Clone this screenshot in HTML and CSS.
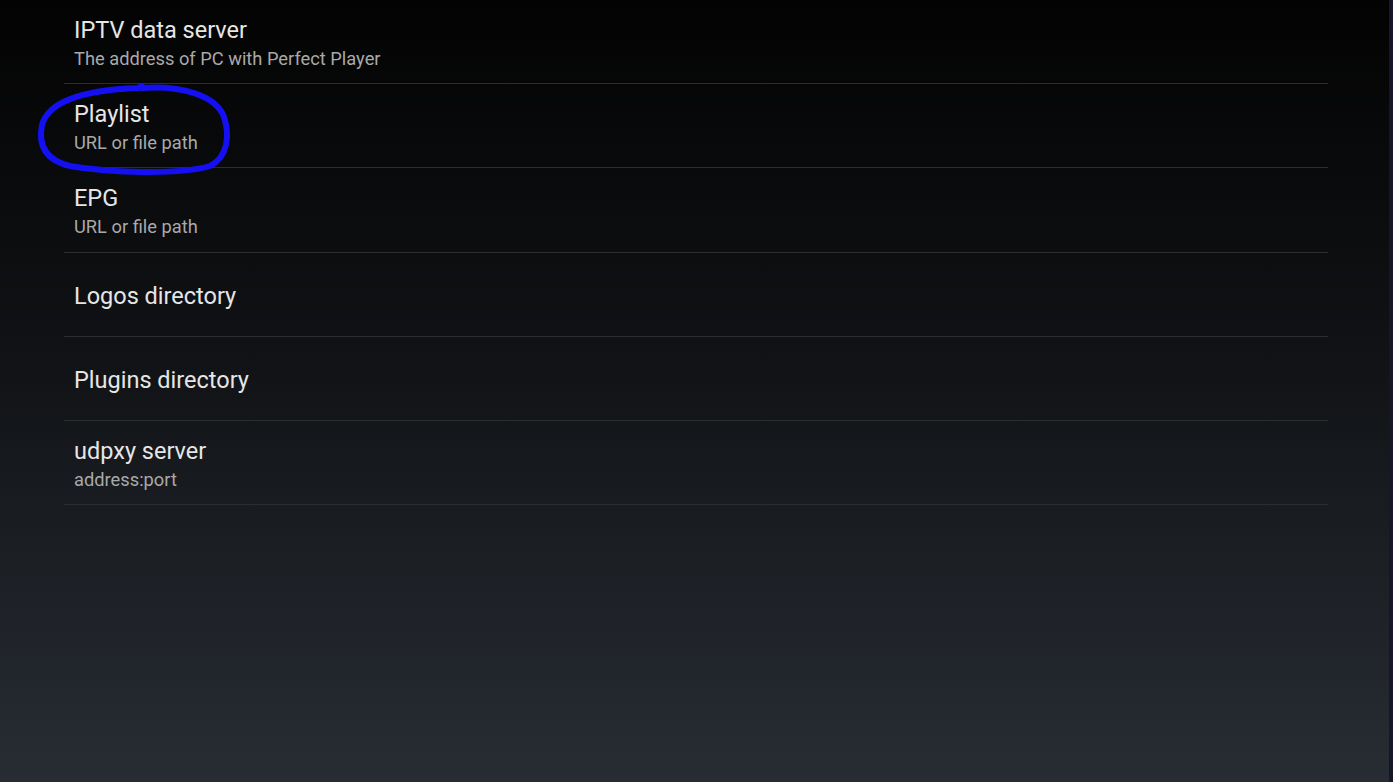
FILE: index.html
```html
<!DOCTYPE html>
<html lang="en">
    <head>
        <meta charset="UTF-8">
        <meta name="viewport" content="width=device-width, initial-scale=1.0">
        <title>Settings</title>
        <link rel="stylesheet" href="styles.css">
    </head>
    <body>
        <div class="screen">
            <ul class="prefs">
                <li class="pref">
                    <div class="pref-title">IPTV data server</div>
                    <div class="pref-summary">The address of PC with Perfect Player</div>
                </li>
                <li class="pref">
                    <div class="pref-title">Playlist</div>
                    <div class="pref-summary">URL or file path</div>
                </li>
                <li class="pref">
                    <div class="pref-title">EPG</div>
                    <div class="pref-summary">URL or file path</div>
                </li>
                <li class="pref">
                    <div class="pref-title">Logos directory</div>
                </li>
                <li class="pref">
                    <div class="pref-title">Plugins directory</div>
                </li>
                <li class="pref">
                    <div class="pref-title">udpxy server</div>
                    <div class="pref-summary">address:port</div>
                </li>
            </ul>
            <svg class="scribble" width="210" height="105" viewBox="0 0 210 105">
                <path d="M 112 13 C 150 10, 186 20, 194 42 C 200 60, 198 82, 180 91 C 150 100, 80 98, 40 91 C 15 85, 8 70, 12 50 C 18 28, 50 15, 108 13 L 112 11" />
            </svg>
        </div>
    </body>
</html>
```

FILE: styles.css
```css
html, body {
    margin: 0;
    height: 100%;
}

body {
    background: linear-gradient(to bottom, #030303 0%, #101215 45%, #282d34 100%);
    font-family: Roboto, "Noto Sans", sans-serif;
    overflow: hidden;
}

.screen {
    position: relative;
    height: 100%;
    border-right: 4px solid #161626;
    box-sizing: border-box;
}

.prefs {
    list-style: none;
    margin: 0 0 0 64px;
    padding: 0;
    width: 1264px;
}

.pref {
    height: 84.2px;
    box-sizing: border-box;
    border-bottom: 1px solid #2c2d2f;
    padding: 4px 10px 0;
    display: flex;
    flex-direction: column;
    justify-content: center;
}

.pref-title {
    color: #e6e6e6;
    font-size: 23.5px;
    line-height: 28px;
}

.pref-summary {
    color: #a9a9a9;
    font-size: 18.3px;
    line-height: 26px;
    margin-top: 2px;
}

.scribble {
    position: absolute;
    left: 30px;
    top: 75px;
}

.scribble path {
    fill: none;
    stroke: #1410f2;
    stroke-width: 6;
    stroke-linecap: round;
    stroke-linejoin: round;
}
```
